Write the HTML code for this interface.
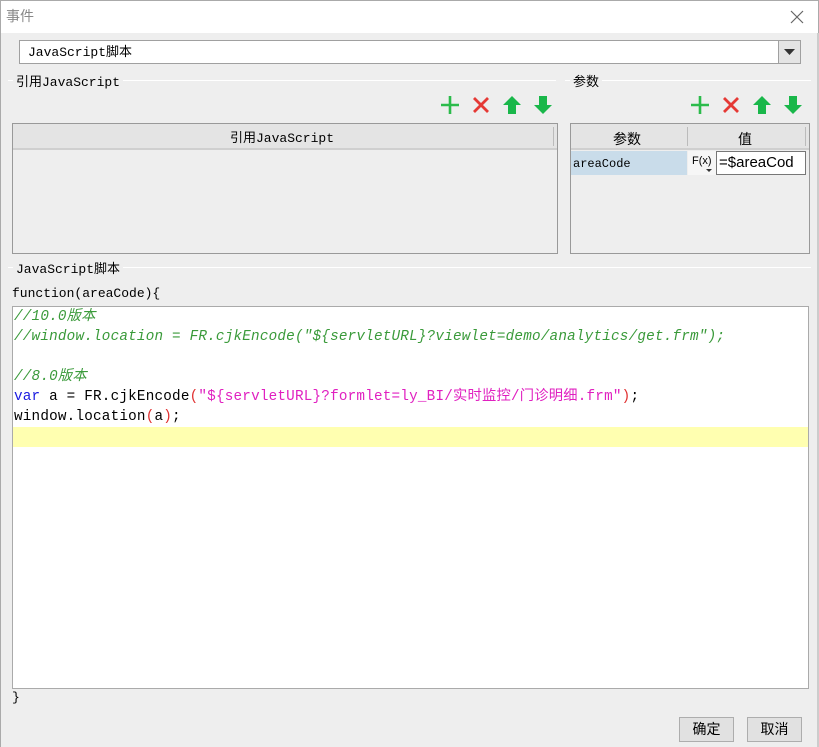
<!DOCTYPE html>
<html><head><meta charset="utf-8"><style>
*{margin:0;padding:0;box-sizing:border-box}
body{width:819px;height:747px;background:#eeeeee;position:relative;overflow:hidden;font-family:"Liberation Mono","Noto Sans CJK SC",monospace;font-size:13px;color:#000}
.a{position:absolute;white-space:nowrap;line-height:16px}
.title{left:0;top:0;width:819px;height:33px;background:#fff;border:1px solid #aaa;border-bottom:none}
.line{position:absolute;height:1px;background:#bdbdbd;border-bottom:1px solid #fff}
.lbl{background:#eeeeee;padding:0 3px}
.code{font-family:"Liberation Mono","Noto Sans CJK SC",monospace;font-size:14.3px;letter-spacing:0.2px;line-height:20px}
.c{color:#3a9a3a;font-style:italic}
.k{color:#1a1ae0}
.s{color:#e020c0}
.p{color:#e03030}
.btn{border:1px solid #adadad;background:#e1e1e1;font-family:"Liberation Sans","Noto Sans CJK SC",sans-serif;font-size:14px;text-align:center;line-height:23px}
</style></head><body>
<div class="a title"></div>
<div class="a" style="left:6px;top:8px;font-family:'Liberation Sans','Noto Sans CJK SC',sans-serif;font-size:14px;color:#888">事件</div>
<svg class="a" style="left:790px;top:10px" width="14" height="14"><path d="M1 1L13 13M13 1L1 13" stroke="#666" stroke-width="1.2"/></svg>
<div class="a" style="left:0;top:33px;width:1px;height:714px;background:#aaa"></div>
<div class="a" style="right:0;top:33px;width:2px;height:714px;background:#ccc"></div>

<div class="a" style="left:19px;top:40px;width:782px;height:24px;background:#fff;border:1px solid #a0a0a0"></div>
<div class="a" style="left:28px;top:45px">JavaScript脚本</div>
<div class="a" style="left:778px;top:41px;width:22px;height:22px;background:#e4e4e4;border-left:1px solid #a0a0a0"></div>
<svg class="a" style="left:784px;top:49px" width="12" height="8"><path d="M0 0H11L5.5 6Z" fill="#333"/></svg>

<div class="line" style="left:8px;top:80px;width:548px"></div>
<div class="a lbl" style="left:13px;top:75px">引用JavaScript</div>
<div class="line" style="left:565px;top:80px;width:246px"></div>
<div class="a lbl" style="left:570px;top:75px">参数</div>

<svg class="a" style="left:438px;top:95px" width="120" height="22">
<path d="M3 10H21M12 1V19" stroke="#2bbb4b" stroke-width="2.6"/>
<path d="M36 3L50 17M50 3L36 17" stroke="#e53935" stroke-width="2.8"/>
<path d="M74 1L83 10H78V19H70V10H65Z" fill="#19b74a"/>
<path d="M105 19L114 10H109V1H101V10H96Z" fill="#19b74a"/>
</svg>
<svg class="a" style="left:688px;top:95px" width="120" height="22">
<path d="M3 10H21M12 1V19" stroke="#2bbb4b" stroke-width="2.6"/>
<path d="M36 3L50 17M50 3L36 17" stroke="#e53935" stroke-width="2.8"/>
<path d="M74 1L83 10H78V19H70V10H65Z" fill="#19b74a"/>
<path d="M105 19L114 10H109V1H101V10H96Z" fill="#19b74a"/>
</svg>

<div class="a" style="left:12px;top:123px;width:546px;height:131px;background:#eeeeee;border:1px solid #999"></div>
<div class="a" style="left:13px;top:124px;width:544px;height:26px;background:#e4e4e4;border-bottom:2px solid #cfcfcf"></div>
<div class="a" style="left:553px;top:127px;width:1px;height:19px;background:#bbb"></div>
<div class="a" style="left:230px;top:131px">引用JavaScript</div>

<div class="a" style="left:570px;top:123px;width:240px;height:131px;background:#eeeeee;border:1px solid #999"></div>
<div class="a" style="left:571px;top:124px;width:238px;height:26px;background:#e4e4e4;border-bottom:2px solid #cfcfcf"></div>
<div class="a" style="left:687px;top:127px;width:1px;height:19px;background:#bbb"></div>
<div class="a" style="left:805px;top:127px;width:1px;height:19px;background:#bbb"></div>
<div class="a" style="left:613px;top:131px;font-family:'Liberation Sans','Noto Sans CJK SC',sans-serif;font-size:14px">参数</div>
<div class="a" style="left:738px;top:131px;font-family:'Liberation Sans','Noto Sans CJK SC',sans-serif;font-size:14px">值</div>
<div class="a" style="left:571px;top:151px;width:116px;height:24px;background:#c9dcea"></div>
<div class="a" style="left:573px;top:156px;font-size:12px">areaCode</div>
<div class="a" style="left:688px;top:151px;width:28px;height:24px;background:#f6f6f6"></div>
<div class="a" style="left:692px;top:153px;font-family:'Liberation Sans',sans-serif;font-size:11px">F(x)</div>
<svg class="a" style="left:706px;top:169px" width="6" height="4"><path d="M0 0H6L3 3Z" fill="#333"/></svg>
<div class="a" style="left:716px;top:151px;width:90px;height:24px;background:#fff;border:1px solid #777"></div>
<div class="a" style="left:719px;top:155px;font-family:'Liberation Sans',sans-serif;font-size:15px">=$areaCod</div>

<div class="line" style="left:8px;top:267px;width:803px"></div>
<div class="a lbl" style="left:13px;top:262px">JavaScript脚本</div>
<div class="a" style="left:12px;top:286px">function(areaCode){</div>

<div class="a" style="left:12px;top:306px;width:797px;height:383px;background:#fff;border:1px solid #aaa"></div>
<div class="a" style="left:13px;top:427px;width:795px;height:20px;background:#ffffb0"></div>
<div class="a code c" style="left:14px;top:307px">//10.0版本</div>
<div class="a code c" style="left:14px;top:327px">//window.location = FR.cjkEncode("${servletURL}?viewlet=demo/analytics/get.frm");</div>
<div class="a code c" style="left:14px;top:367px">//8.0版本</div>
<div class="a code" style="left:14px;top:387px"><span class="k">var</span> a = FR.cjkEncode<span class="p">(</span><span class="s">"${servletURL}?formlet=ly_BI/实时监控/门诊明细.frm"</span><span class="p">)</span>;</div>
<div class="a code" style="left:14px;top:407px">window.location<span class="p">(</span>a<span class="p">)</span>;</div>
<div class="a" style="left:12px;top:690px">}</div>

<div class="a btn" style="left:679px;top:717px;width:55px;height:25px">确定</div>
<div class="a btn" style="left:747px;top:717px;width:55px;height:25px">取消</div>
</body></html>
